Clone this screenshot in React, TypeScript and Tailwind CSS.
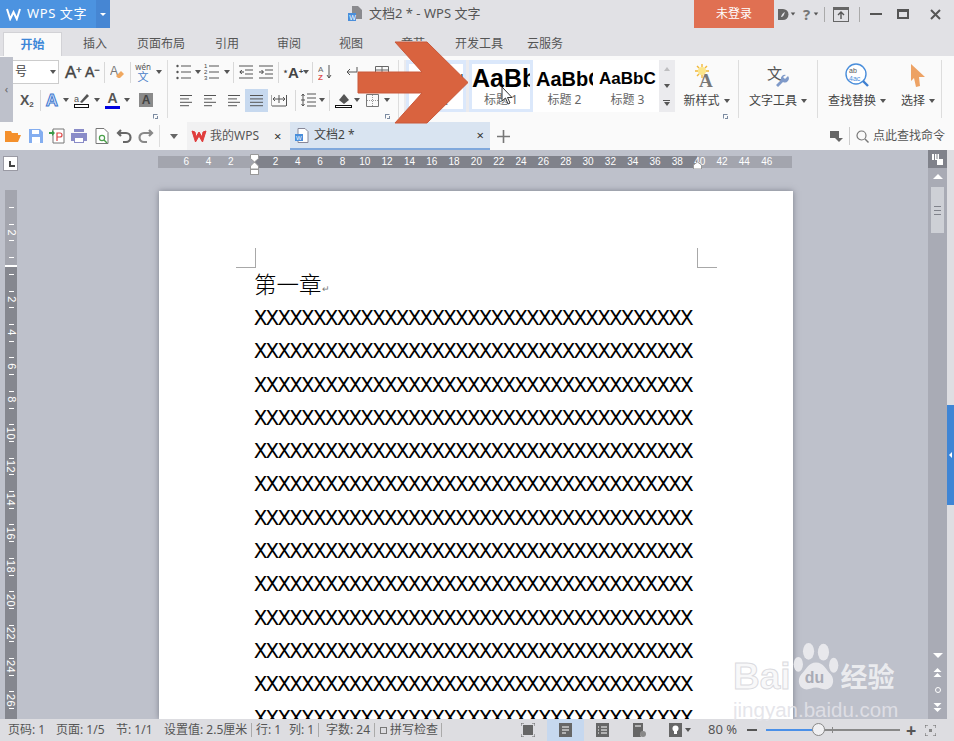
import type { ReactNode } from "react";

const tabs = [
  { label: "插入", w: "w-[66px]" },
  { label: "页面布局", w: "w-[66px]" },
  { label: "引用", w: "w-[66px]" },
  { label: "审阅", w: "w-[58px]" },
  { label: "视图", w: "w-[66px]" },
  { label: "章节", w: "w-[58px]" },
  { label: "开发工具", w: "w-[74px]" },
  { label: "云服务", w: "w-[58px]" },
];

const rulerNums = ["6", "4", "2", "", "2", "4", "6", "8", "10", "12", "14", "16", "18", "20", "22", "24", "26", "28", "30", "32", "34", "36", "38", "40", "42", "44", "46"];
const vRulerNums = ["4", "6", "8", "10", "12", "14", "16", "18", "20", "22", "24", "26"];
const xLine = "X".repeat(37);
const xLines = Array.from({ length: 13 }, (_, i) => i);

function Caret({ className = "" }: { className?: string }) {
  return <span className={`inline-block h-0 w-0 border-x-[3.5px] border-t-[4px] border-x-transparent border-t-[#555] ${className}`} />;
}

function Sep({ className = "" }: { className?: string }) {
  return <span className={`inline-block h-[21px] w-px bg-[#d8d8d8] ${className}`} />;
}

function Lines({ rows, className = "" }: { rows: number[]; className?: string }) {
  // small stack of lines, each number is a row width out of 14
  return (
    <svg width="14" height="13" viewBox="0 0 14 13" className={className}>
      {rows.map((w, i) => (
        <rect key={i} x="0" y={1 + i * 3.4} width={w} height="1" fill="#555" />
      ))}
    </svg>
  );
}

function ListIcon({ numbered }: { numbered?: boolean }) {
  return (
    <svg width="15" height="16" viewBox="0 0 15 16">
      {[2, 8, 14].map((y, i) =>
        numbered ? (
          <text key={y} x="0" y={y + 2} fontSize="6" fill="#444" fontFamily="Liberation Sans">{i + 1}</text>
        ) : (
          <circle key={y} cx="1.5" cy={y} r="1.2" fill="#555" />
        ),
      )}
      {[2, 8, 14].map((y) => (
        <rect key={y} x="5" y={y - 0.5} width="10" height="1" fill="#555" />
      ))}
    </svg>
  );
}

function IndentIcon({ right }: { right?: boolean }) {
  return (
    <svg width="14" height="14" viewBox="0 0 14 14">
      <path d="M0 1h14M6 5h8M6 9h8M0 13h14" stroke="#555" fill="none" />
      <path d={right ? "M0 7h4M2.5 5l2 2-2 2" : "M5 7H1M2.8 5l-2 2 2 2"} stroke="#3a3a3a" fill="none" />
    </svg>
  );
}

function QuickIcon({ children }: { children: ReactNode }) {
  return (
    <svg width="16" height="16" viewBox="0 0 16 16" className="shrink-0">
      {children}
    </svg>
  );
}

function BigTool({ icon, label, w }: { icon: ReactNode; label: string; w: string }) {
  return (
    <div className={`flex h-full shrink-0 flex-col items-center ${w}`}>
      <div className="flex h-[33px] items-center justify-center pt-[6px]">{icon}</div>
      <div className="mt-[4px] flex items-center gap-[4px] whitespace-nowrap text-[12px] leading-[16px] text-[#444]">
        {label}
        <Caret />
      </div>
    </div>
  );
}

function StyleItem({ w, sample, label, sampleClass, active }: { w: string; sample: string; label: string; sampleClass: string; active?: boolean }) {
  return (
    <div className={`flex h-[52px] shrink-0 flex-col items-center overflow-hidden border-[3px] border-t-[4px] bg-white ${w} ${active ? "border-[#dbe8fb]" : "border-white"}`}>
      <div className={`flex h-[29px] w-full items-center overflow-hidden whitespace-nowrap font-['Liberation_Sans'] font-bold text-black ${sampleClass}`}>
        {sample}
      </div>
      <div className="text-[12px] leading-[14px] text-[#666]">{label}</div>
    </div>
  );
}

function VRulerCell({ n }: { n: string }) {
  return (
    <div className="flex h-[33.4px] flex-col items-center">
      <div className="flex h-[15.7px] items-center justify-center">
        <span className="rotate-90 font-['Liberation_Sans'] text-[11px] leading-none tracking-[0.5px] text-white">{n}</span>
      </div>
      <div className="h-px w-[5px] shrink-0 bg-white" />
      <div className="h-[15.7px] shrink-0" />
      <div className="h-px w-[5px] shrink-0 bg-white" />
    </div>
  );
}

export default function App() {
  return (
    <div className="relative flex h-[741px] w-[954px] flex-col overflow-hidden bg-[#bec1cb] font-['Noto_Sans','Noto_Sans_CJK_SC',sans-serif] text-[12px] text-[#444]">
      {/* title bar */}
      <div className="flex h-[28px] shrink-0 items-stretch bg-[#e1e1e5]">
        <div className="flex w-[110px] shrink-0 items-stretch bg-[#4c93e0] text-white">
          <div className="flex w-[96px] items-center gap-[6px] pl-[6px]">
            <svg width="15" height="13" viewBox="0 0 15 13">
              <path d="M1 1l3.2 10L7.5 4l3.3 7L14 1" fill="none" stroke="#fff" strokeWidth="2" />
            </svg>
            <span className="whitespace-nowrap text-[13px] tracking-[0.6px]">WPS 文字</span>
          </div>
          <div className="flex flex-1 items-center justify-center bg-[#4686d3]">
            <span className="h-0 w-0 border-x-[3px] border-t-[3px] border-x-transparent border-t-white" />
          </div>
        </div>
        <div className="flex w-[584px] shrink-0 items-center pl-[238px] text-[13px] text-[#555]">
          <svg width="15" height="16" viewBox="0 0 15 16" className="mr-[6px]">
            <path d="M4 0h6l4 4v9H4z" fill="#8a8a8e" />
            <rect x="0" y="7" width="8" height="8" fill="#4a8edb" />
            <text x="1.3" y="14" fontSize="7" fill="#fff" fontFamily="Liberation Sans">W</text>
          </svg>
          <span className="whitespace-nowrap">文档2 * - WPS 文字</span>
        </div>
        <div className="flex w-[80px] shrink-0 items-center justify-center bg-[#e07052] text-[12px] text-white">未登录</div>
        <div className="flex flex-1 items-center text-[#666]">
          <svg width="11" height="13" viewBox="0 0 11 13" className="ml-[4px]">
            <path d="M0 1h5a5.5 5.5 0 0 1 0 11H0z" fill="#666" />
            <path d="M3 9c1-3 2-4 4-5-1 2-1 4-3 5z" fill="#e1e1e5" />
          </svg>
          <Caret className="ml-[1px] scale-75" />
          <span className="ml-[7px] text-[15px] font-bold leading-none text-[#777]">?</span>
          <Caret className="ml-[3px] scale-75" />
          <span className="ml-[5px] h-[15px] w-px bg-[#aaa]" />
          <svg width="16" height="15" viewBox="0 0 16 15" className="ml-[8px]">
            <rect x="0.5" y="0.5" width="15" height="14" fill="none" stroke="#666" />
            <rect x="0" y="0" width="16" height="3" fill="#666" />
            <path d="M8 12V5M5 8l3-3 3 3" fill="none" stroke="#555" strokeWidth="1.4" />
          </svg>
          <span className="ml-[10px] h-[15px] w-px bg-[#aaa]" />
          <span className="ml-[10px] h-[2px] w-[12px] bg-[#555]" />
          <span className="ml-[15px] h-[10px] w-[12px] border-2 border-t-[3px] border-[#555]" />
          <svg width="11" height="11" viewBox="0 0 11 11" className="ml-[21px]">
            <path d="M1 1l9 9M10 1l-9 9" stroke="#555" strokeWidth="2" />
          </svg>
        </div>
      </div>

      {/* ribbon tabs */}
      <div className="flex h-[28px] shrink-0 items-end bg-[#e1e1e5] pl-[3px] text-[12px] text-[#555]">
        <div className="flex h-[24px] w-[59px] items-center justify-center border-x border-t border-[#d2d2d6] bg-[#fafafa] font-bold text-[#3d87d8]">开始</div>
        {tabs.map((t) => (
          <div key={t.label} className={`flex h-[24px] items-center justify-center whitespace-nowrap ${t.w}`}>
            {t.label}
          </div>
        ))}
      </div>

      {/* ribbon */}
      <div className="flex h-[66px] shrink-0 items-stretch bg-[#fafafa]">
        <div className="mt-px flex h-[65px] w-[13px] shrink-0 items-center justify-center bg-[#bec1cb] text-[11px] text-[#666]">‹</div>

        {/* font group */}
        <div className="relative flex w-[154px] shrink-0 flex-col pt-[4px]">
          <div className="flex h-[24px] items-center">
            <div className="flex h-[24px] w-[46px] items-center justify-between border border-l-0 border-[#ccc] bg-white pl-[2px] pr-[2px] text-[12px]">
              号<Caret />
            </div>
            <span className="ml-[6px] w-[15px] whitespace-nowrap font-['Liberation_Sans'] text-[17px] leading-none [-webkit-text-stroke:0.4px_#444]">A<sup className="text-[9px]">+</sup></span>
            <span className="ml-[5px] w-[15px] whitespace-nowrap font-['Liberation_Sans'] text-[14px] leading-none [-webkit-text-stroke:0.4px_#444]">A<sup className="text-[9px]">−</sup></span>
            <Sep className="ml-[4px]" />
            <svg width="15" height="16" viewBox="0 0 15 16" className="ml-[5px]">
              <text x="0" y="11" fontSize="12" fill="#777" fontFamily="Liberation Sans">A</text>
              <path d="M6 12l5-5 3 3-4 4H8z" fill="#f0a860" />
            </svg>
            <Sep className="ml-[5px]" />
            <div className="ml-[4px] flex h-[20px] w-[16px] flex-col items-center leading-none">
              <span className="text-[8px] leading-[9px] text-[#555]">wén</span>
              <span className="text-[11px] leading-[11px] text-[#4a80c8]">文</span>
            </div>
            <Caret className="ml-[5px]" />
          </div>
          <div className="mt-[3px] flex h-[26px] items-center">
            <span className="ml-[7px] font-['Liberation_Sans'] text-[14px] font-bold leading-none text-[#555]">X<sub className="text-[8px]">2</sub></span>
            <Sep className="ml-[6px]" />
            <span className="ml-[5px] font-['Liberation_Sans'] text-[17px] font-bold leading-none text-[#dbe7fb] [-webkit-text-stroke:1px_#3e78cf]">A</span>
            <Caret className="ml-[5px]" />
            <svg width="16" height="17" viewBox="0 0 16 17" className="ml-[5px]">
              <path d="M6 10l7-8 2 2-7 7z" fill="#555" />
              <text x="0" y="10" fontSize="9" fill="#555" fontFamily="Liberation Sans">a</text>
              <rect x="0.5" y="12.5" width="14" height="3" fill="#fff" stroke="#111" />
            </svg>
            <Caret className="ml-[4px]" />
            <div className="ml-[5px] flex w-[15px] flex-col items-center">
              <span className="font-['Liberation_Sans'] text-[14px] font-bold leading-[14px] text-[#555]">A</span>
              <span className="mt-px h-[3px] w-[15px] bg-[#0000e0]" />
            </div>
            <Caret className="ml-[4px]" />
            <span className="ml-[9px] flex h-[14px] w-[14px] items-center justify-center bg-[#8a8a8a] font-['Liberation_Sans'] text-[12px] font-bold leading-none text-[#444]">A</span>
          </div>
          <svg width="5" height="5" viewBox="0 0 5 5" className="absolute bottom-[3px] right-[9px]">
            <path d="M0 .5h4.5M.5 0v4.5M4.5 2v3M2 4.5h3" stroke="#7a8aa0" fill="none" />
          </svg>
        </div>
        <span className="mt-[4px] h-[58px] w-px shrink-0 bg-[#ddd]" />

        {/* paragraph group */}
        <div className="relative flex w-[230px] shrink-0 flex-col pt-[4px]">
          <div className="flex h-[24px] items-center pl-[8px]">
            <ListIcon />
            <Caret className="ml-[4px]" />
            <span className="ml-[3px]" />
            <ListIcon numbered />
            <Caret className="ml-[5px]" />
            <Sep className="ml-[3px]" />
            <span className="ml-[5px]"><IndentIcon /></span>
            <span className="ml-[6px]"><IndentIcon right /></span>
            <Sep className="ml-[5px]" />
            <span className="ml-[4px] w-[17px] whitespace-nowrap font-['Liberation_Sans'] text-[15px] font-bold leading-none">
              <sup className="text-[8px]">⋆</sup>A<sup className="text-[8px]">+</sup>
            </span>
            <Caret className="ml-[3px]" />
            <Sep className="ml-[3px]" />
            <svg width="15" height="17" viewBox="0 0 15 17" className="ml-[5px]">
              <text x="0" y="8" fontSize="8" fill="#666" fontFamily="Liberation Sans">A</text>
              <text x="0" y="16" fontSize="8" fontWeight="bold" fill="#e05050" fontFamily="Liberation Sans">Z</text>
              <path d="M11 1v13M9 11l2 3 2-3" stroke="#555" fill="none" />
            </svg>
            <svg width="14" height="12" viewBox="0 0 14 12" className="ml-[12px]">
              <path d="M12 1v5H2M5 3L2 6l3 3" stroke="#555" fill="none" />
            </svg>
            <svg width="14" height="12" viewBox="0 0 14 12" className="ml-[16px]">
              <path d="M.5.5h13v11H.5zM.5 4h13M.5 8h13M7 .5v11" stroke="#666" fill="none" />
            </svg>
          </div>
          <div className="mt-[3px] flex h-[26px] items-center pl-[12px]">
            <Lines rows={[12, 9, 12, 9]} />
            <Lines rows={[12, 8, 12, 8]} className="ml-[10px]" />
            <Lines rows={[12, 9, 12, 9]} className="ml-[10px]" />
            <div className="ml-[3px] flex h-[23px] w-[23px] items-center justify-center bg-[#c7d9ef]">
              <Lines rows={[13, 13, 13, 13]} />
            </div>
            <svg width="16" height="13" viewBox="0 0 16 13" className="ml-[3px]">
              <path d="M0 1v11M15.5 1v11M1 12h14M2 5h12M4 3L2 5l2 2M12 3l2 2-2 2M8 1v8" stroke="#555" fill="none" />
            </svg>
            <Sep className="ml-[8px]" />
            <svg width="15" height="14" viewBox="0 0 15 14" className="ml-[5px]">
              <path d="M6 1h9M6 5h9M6 9h9M6 13h9M0 7h4M2 1v12M.5 3L2 1l1.5 2M.5 11L2 13l1.5-2" stroke="#555" fill="none" />
            </svg>
            <Caret className="ml-[3px]" />
            <Sep className="ml-[4px]" />
            <svg width="17" height="18" viewBox="0 0 17 18" className="ml-[5px]">
              <path d="M4 9l5-6 5 6-5 4z" fill="#555" />
              <rect x="0.5" y="14.5" width="16" height="2" fill="#fff" stroke="#111" />
            </svg>
            <Caret className="ml-[2px]" />
            <svg width="13" height="13" viewBox="0 0 13 13" className="ml-[6px]">
              <path d="M.5.5h12v12H.5z" stroke="#777" fill="none" />
              <path d="M6.5 1v11M1 6.5h11" stroke="#999" strokeDasharray="1 1" />
            </svg>
            <Caret className="ml-[5px]" />
          </div>
          <svg width="5" height="5" viewBox="0 0 5 5" className="absolute bottom-[3px] right-[8px]">
            <path d="M0 .5h4.5M.5 0v4.5M4.5 2v3M2 4.5h3" stroke="#7a8aa0" fill="none" />
          </svg>
        </div>
        <span className="mt-[4px] h-[58px] w-px shrink-0 bg-[#ddd]" />

        {/* style gallery */}
        <div className="ml-[5px] mt-[4px] flex h-[52px] w-[271px] shrink-0 bg-[#ebebee] pl-[2px]">
          <StyleItem w="w-[60px] mr-[3px]" sample="AaBbCcDd" label="正文" sampleClass="justify-center text-[11px] font-normal" active />
          <StyleItem w="w-[64px]" sample="AaBb" label="标题 1" sampleClass="text-[25px] leading-none" active />
          <StyleItem w="w-[63px]" sample="AaBbC" label="标题 2" sampleClass="text-[20px] leading-none" />
          <StyleItem w="w-[63px]" sample="AaBbC" label="标题 3" sampleClass="text-[17px] leading-none" />
          <div className="ml-px flex w-[13px] flex-col items-center bg-[#ebebee]">
            <span className="flex h-[17px] items-center"><Caret className="rotate-180 opacity-30" /></span>
            <span className="flex h-[17px] items-center"><Caret /></span>
            <span className="flex h-[18px] flex-col items-center justify-center gap-[1px]">
              <span className="h-px w-[7px] bg-[#555]" />
              <Caret />
            </span>
          </div>
        </div>

        {/* big tools */}
        <div className="relative shrink-0">
          <BigTool
            w="w-[63px]"
            label="新样式"
            icon={
              <svg width="26" height="24" viewBox="0 0 26 24">
                <circle cx="8" cy="7" r="4" fill="#fbe58a" />
                <path d="M8 0v3M8 11v3M1 7h3M12 7h3M3 2l2 2M13 2l-2 2M3 12l2-2" stroke="#f2b93a" strokeWidth="1.4" />
                <text x="5" y="23" fontSize="19" fontFamily="Liberation Serif" fontWeight="bold" fill="#777">A</text>
              </svg>
            }
          />
          <svg width="5" height="5" viewBox="0 0 5 5" className="absolute bottom-[3px] right-[10px]">
            <path d="M0 .5h4.5M.5 0v4.5M4.5 2v3M2 4.5h3" stroke="#7a8aa0" fill="none" />
          </svg>
        </div>
        <span className="mt-[4px] h-[58px] w-px shrink-0 bg-[#ddd]" />
        <BigTool
          w="w-[78px]"
          label="文字工具"
          icon={
            <svg width="23" height="24" viewBox="0 0 23 24">
              <text x="0" y="15" fontSize="15" fill="#555" fontFamily="Noto Sans CJK SC">文</text>
              <path d="M21 12l-3 3-2-2 3-2a4 4 0 0 0-5 5l-5 5 2 2 5-5a4 4 0 0 0 5-6z" fill="#7f9ac9" />
            </svg>
          }
        />
        <span className="mt-[4px] h-[58px] w-px shrink-0 bg-[#ddd]" />
        <BigTool
          w="w-[78px]"
          label="查找替换"
          icon={
            <svg width="25" height="25" viewBox="0 0 25 25">
              <circle cx="11" cy="11" r="10" fill="#fff" stroke="#4a8edb" strokeWidth="1.4" />
              <path d="M18 18l5 5" stroke="#3e7fd0" strokeWidth="2.4" />
              <text x="4" y="10" fontSize="7" fill="#555" fontFamily="Liberation Sans">ab</text>
              <text x="4" y="18" fontSize="7" fill="#4a8edb" fontFamily="Liberation Sans">4ac</text>
            </svg>
          }
        />
        <BigTool
          w="w-[44px]"
          label="选择"
          icon={
            <svg width="16" height="23" viewBox="0 0 16 23">
              <path d="M1 0l14 13H9l1 9-4 1-2-9-3 3z" fill="#eda264" />
            </svg>
          }
        />
        <span className="ml-[1px] mt-[4px] h-[58px] w-px shrink-0 bg-[#ddd]" />
      </div>

      {/* quick access and document tabs */}
      <div className="flex h-[28px] shrink-0 items-stretch bg-[#fafafa]">
        <div className="flex w-[187px] shrink-0 items-center pl-[5px]">
          <QuickIcon><path d="M0 14V3h6l1 2h6v2H4L2 13l2-6h12l-3 7z" fill="#f4902c" /></QuickIcon>
          <span className="ml-[7px]" />
          <QuickIcon><path d="M1 1h11l3 3v11H1z" fill="#84aef0" /><rect x="4" y="2" width="7" height="4" fill="#fff" /><rect x="4" y="9" width="8" height="6" fill="#fff" /></QuickIcon>
          <span className="ml-[5px]" />
          <QuickIcon>
            <path d="M4 1h11v14H4z" fill="#fff" stroke="#777" />
            <path d="M0 4h3V2l3 3-3 3V6H0z" fill="#3b9b4a" />
            <path d="M8 13V5h3a2 2 0 0 1 0 4H8" fill="none" stroke="#d44" strokeWidth="1.2" />
          </QuickIcon>
          <span className="ml-[6px]" />
          <QuickIcon><path d="M0 5h16v8h-3v2H3v-2H0zM3 1h10v3H3z" fill="#8a8cc8" /><rect x="4" y="10" width="8" height="4" fill="#fff" /></QuickIcon>
          <span className="ml-[7px]" />
          <QuickIcon>
            <path d="M2 .5h8l4 4v11H2z" fill="#fff" stroke="#777" />
            <circle cx="8" cy="10" r="2.6" fill="none" stroke="#4aa04a" strokeWidth="1.2" />
            <path d="M10 12l3 3" stroke="#4aa04a" strokeWidth="1.4" />
          </QuickIcon>
          <span className="ml-[6px]" />
          <QuickIcon><path d="M5 2L2 5l3 3M2 5h8a4 4 0 0 1 0 9H7" fill="none" stroke="#666" strokeWidth="2.2" /></QuickIcon>
          <span className="ml-[6px]" />
          <QuickIcon><path d="M11 2l3 3-3 3M14 5H6a4 4 0 0 0 0 9h3" fill="none" stroke="#888" strokeWidth="2.2" /></QuickIcon>
          <span className="ml-[5px] h-[22px] w-px bg-[#ddd]" />
          <span className="ml-[10px] h-0 w-0 border-x-[4.5px] border-t-[5px] border-x-transparent border-t-[#666]" />
        </div>
        <div className="flex w-[103px] shrink-0 items-center bg-[#f1f1f2] pl-[4px] text-[#555]">
          <svg width="16" height="13" viewBox="0 0 16 13">
            <path d="M1 1l3.5 11L8 6l3.5 6L15 1l-3 1-1 5-3-5-3 5-1-5z" fill="#e03c3c" stroke="#e03c3c" />
          </svg>
          <span className="ml-[3px] whitespace-nowrap">我的WPS</span>
          <span className="ml-[15px] text-[13px] leading-none text-[#333]">×</span>
        </div>
        <div className="flex w-[200px] shrink-0 items-center border-b-2 border-[#80a8dc] bg-[#d9e4f1] pl-[5px] text-[#444]">
          <svg width="14" height="15" viewBox="0 0 14 15">
            <path d="M3 .5h7l3 3v11H3z" fill="#fff" stroke="#889" />
            <rect x="0" y="6" width="8" height="7" fill="#4a8edb" />
            <text x="1" y="12" fontSize="6" fill="#fff" fontFamily="Liberation Sans">W</text>
          </svg>
          <span className="ml-[5px] whitespace-nowrap">文档2 *</span>
          <span className="ml-auto mr-[6px] text-[13px] leading-none text-[#333]">×</span>
        </div>
        <span className="ml-[7px] flex w-[13px] items-center justify-center">
          <svg width="13" height="13" viewBox="0 0 13 13"><path d="M6.5 0v13M0 6.5h13" stroke="#777" strokeWidth="1.6" /></svg>
        </span>
        <div className="ml-auto flex items-center pr-[9px]">
          <svg width="13" height="11" viewBox="0 0 13 11"><path d="M0 0h9v7H0zM5 7h8l-4 4z" fill="#666" /></svg>
          <span className="ml-[6px] h-[18px] w-px bg-[#ccc]" />
          <svg width="13" height="13" viewBox="0 0 13 13" className="ml-[6px]">
            <circle cx="5.5" cy="5.5" r="4.5" fill="none" stroke="#777" strokeWidth="1.2" />
            <path d="M9 9l3.5 3.5" stroke="#777" strokeWidth="1.4" />
          </svg>
          <span className="ml-[4px] whitespace-nowrap text-[#555]">点此查找命令</span>
        </div>
      </div>

      {/* document area */}
      <div className="flex min-h-0 flex-1">
        <div className="flex min-w-0 flex-1 flex-col">
          <div className="flex h-[41px] shrink-0 pt-[5px]">
            <div className="mt-[1px] ml-[3px] flex h-[15px] w-[15px] items-end justify-center border border-[#9a9aa4] bg-white pb-[3px] pl-[2px]">
              <span className="h-[6px] w-[6px] border-b-2 border-l-2 border-[#444]" />
            </div>
            <div className="relative ml-[140px] mt-[1px] flex h-[12px] w-[634px] items-center bg-[linear-gradient(90deg,#a3a5ae_96px,#80828b_96px,#80828b_539px,#a3a5ae_539px)] pl-[17px] font-['Liberation_Sans'] text-[10px] leading-none text-white">
              {rulerNums.map((n, i) => (
                <span key={i} className="w-[22.33px] shrink-0 text-center">{n}</span>
              ))}
              <svg width="9" height="22" viewBox="0 0 9 22" className="absolute left-[92px] top-[-2px]">
                <path d="M.5.5h8v4L4.5 8 .5 4.5zM4.5 8l4 4v3h-8v-3z" fill="#fff" stroke="#999" />
                <rect x=".5" y="15.5" width="8" height="5" fill="#fff" stroke="#999" />
              </svg>
              <svg width="9" height="7" viewBox="0 0 9 7" className="absolute left-[535px] top-[6px]">
                <path d="M4.5 0l4 3v4h-8V3z" fill="#fff" stroke="#999" />
              </svg>
            </div>
          </div>
          <div className="flex min-h-0 flex-1">
            <div className="ml-[5px] -mt-px flex w-[12px] shrink-0 flex-col items-stretch overflow-hidden bg-[#85878f]">
              <div className="flex h-[75px] shrink-0 flex-col items-center bg-[#a3a5ae] pt-[17px]">
                <div className="h-px w-[5px] shrink-0 bg-white" />
                <div className="h-[15.7px] shrink-0" />
                <div className="h-px w-[5px] shrink-0 bg-white" />
                <div className="flex h-[15.7px] shrink-0 items-center justify-center">
                  <span className="rotate-90 font-['Liberation_Sans'] text-[11px] leading-none text-white">2</span>
                </div>
                <div className="h-px w-[5px] shrink-0 bg-white" />
                <div className="h-[15.7px] shrink-0" />
                <div className="h-px w-[5px] shrink-0 bg-white" />
              </div>
              <div className="h-[2px] shrink-0 bg-white" />
              <div className="flex shrink-0 flex-col items-center pt-[7px]">
                <div className="h-px w-[5px] shrink-0 bg-white" />
                <div className="h-[15.7px] shrink-0" />
                <div className="h-px w-[5px] shrink-0 bg-white" />
                <VRulerCell n="2" />
                {vRulerNums.map((n) => (
                  <VRulerCell key={n} n={n} />
                ))}
              </div>
            </div>
            <div className="ml-[142px] w-[634px] shrink-0 overflow-hidden bg-white pl-[77px] pt-[57px] shadow-[0_0_6px_rgba(70,72,85,0.55)]">
              <div className="flex">
                <div className="h-[20px] w-[20px] border-b border-r border-[#a8a8a8]" />
                <div className="ml-[441px] h-[20px] w-[20px] border-b border-l border-[#a8a8a8]" />
              </div>
              <div className="ml-[18px] flex h-[34px] items-center text-[22.5px] font-light leading-none text-black">
                第一章<span className="mt-[6px] text-[9px] text-[#777]">↵</span>
              </div>
              {xLines.map((i) => (
                <div key={i} className="ml-[18px] h-[33.3px] whitespace-nowrap pt-px font-['Liberation_Mono'] text-[22px] leading-[33px] tracking-[-1.36px] text-black">
                  {xLine}
                </div>
              ))}
            </div>
          </div>
        </div>

        {/* vertical scrollbar */}
        <div className="flex w-[19px] shrink-0 flex-col items-center bg-[#a9abb5]">
          <div className="flex h-[18px] w-full items-center justify-center bg-[#80828b]">
            <svg width="11" height="11" viewBox="0 0 11 11">
              <path d="M0 0h7v6H0zM5 5h6v6H5z" fill="#fff" />
              <path d="M2.5 0v6M5 0v5" stroke="#80828b" />
            </svg>
          </div>
          <span className="mt-[6px] h-0 w-0 border-x-[5px] border-b-[5px] border-x-transparent border-b-white" />
          <div className="mt-[8px] flex h-[46px] w-[13px] flex-col items-center justify-center gap-[3px] bg-[#ced0d6]">
            <span className="h-px w-[7px] bg-[#80828b]" />
            <span className="h-px w-[7px] bg-[#80828b]" />
            <span className="h-px w-[7px] bg-[#80828b]" />
          </div>
          <div className="mt-auto flex flex-col items-center pb-[7px] text-white">
            <span className="h-0 w-0 border-x-[5px] border-t-[5px] border-x-transparent border-t-white" />
            <svg width="9" height="10" viewBox="0 0 9 10" className="mt-[10px]"><path d="M4.5 0l4 4h-8zM4.5 5l4 4h-8z" fill="#fff" /></svg>
            <span className="mt-[9px] h-[6px] w-[6px] rounded-full border border-white" />
            <svg width="9" height="10" viewBox="0 0 9 10" className="mt-[9px]"><path d="M4.5 5l4-4h-8zM4.5 10l4-4h-8z" fill="#fff" /></svg>
          </div>
        </div>
        <div className="flex w-[7px] shrink-0 flex-col bg-[#dedee2] pt-[255px]">
          <div className="flex h-[100px] items-center justify-center bg-[#3f85d5]">
            <span className="h-0 w-0 border-y-[3px] border-r-[3px] border-y-transparent border-r-white" />
          </div>
        </div>
      </div>

      {/* status bar */}
      <div className="z-10 flex h-[22px] shrink-0 items-center bg-[#dddde1] text-[12px] text-[#555]">
        <div className="flex w-[446px] shrink-0 items-center whitespace-nowrap pl-[8px]">
          <span className="w-[48px]">页码: 1</span>
          <span className="w-[60px]">页面: 1/5</span>
          <span className="w-[48px]">节: 1/1</span>
          <span className="w-[84px]">设置值: 2.5厘米</span>
          <span className="ml-[3px] h-[14px] w-px bg-[#aaa]" />
          <span className="ml-[4px] w-[33px]">行: 1</span>
          <span className="w-[29px]">列: 1</span>
          <span className="h-[14px] w-px bg-[#aaa]" />
          <span className="ml-[7px] w-[48px]">字数: 24</span>
          <span className="h-[14px] w-px bg-[#aaa]" />
          <span className="ml-[5px] h-[7px] w-[7px] border border-[#777]" />
          <span className="ml-[3px] w-[48px]">拼写检查</span>
          <span className="ml-[3px] h-[14px] w-px bg-[#aaa]" />
        </div>
        <div className="flex h-full flex-1 items-center">
          <svg width="14" height="14" viewBox="0 0 14 14" className="ml-[75px]">
            <rect x="2" y="2" width="10" height="10" fill="#666" />
            <path d="M0 3V0h3M11 0h3v3M14 11v3h-3M3 14H0v-3" fill="none" stroke="#666" />
          </svg>
          <div className="ml-[12px] flex h-full w-[37px] items-center justify-center bg-[#c6d8ef]">
            <svg width="13" height="14" viewBox="0 0 13 14">
              <rect width="13" height="14" fill="#666" />
              <path d="M3 4h7M3 7h7M3 10h4" stroke="#fff" />
            </svg>
          </div>
          <svg width="13" height="14" viewBox="0 0 13 14" className="ml-[12px]">
            <rect width="13" height="14" fill="#666" />
            <path d="M5 4h6M5 7h6M5 10h6M2 4h1M2 7h1M2 10h1" stroke="#fff" />
          </svg>
          <svg width="13" height="14" viewBox="0 0 13 14" className="ml-[24px]">
            <path d="M0 0h10v8a4 4 0 0 0-2 6H0z" fill="#666" />
            <path d="M2 3h6" stroke="#fff" />
            <circle cx="10" cy="11" r="3" fill="#888" />
          </svg>
          <svg width="13" height="14" viewBox="0 0 13 14" className="ml-[23px]">
            <rect width="13" height="14" fill="#666" />
            <circle cx="6.5" cy="5.5" r="3" fill="#fff" />
            <rect x="5" y="8" width="3" height="3" fill="#fff" />
          </svg>
          <Caret className="ml-[3px]" />
          <span className="ml-[17px] w-[30px] whitespace-nowrap text-[13px]">80 %</span>
          <span className="ml-[9px] h-[2px] w-[10px] bg-[#555]" />
          <div className="relative ml-[9px] flex h-[2px] w-[134px] bg-[#888]">
            <span className="h-full w-[48px] bg-[#4a90e8]" />
            <span className="absolute left-[46px] top-[-6px] h-[13px] w-[13px] rounded-full border border-[#888] bg-[#f0f0f2]" />
            <span className="absolute left-[66px] top-[-2px] h-[6px] w-px bg-[#888]" />
          </div>
          <span className="ml-[6px] text-[18px] font-bold leading-none text-[#555]">+</span>
          <svg width="11" height="11" viewBox="0 0 11 11" className="ml-[9px]">
            <path d="M0 3V0h3M8 0h3v3M11 8v3H8M3 11H0V8" fill="none" stroke="#666" />
            <rect x="4" y="4" width="3" height="3" fill="#888" />
          </svg>
        </div>
      </div>

      {/* red arrow laid over the ribbon */}
      <svg width="112" height="83" viewBox="0 0 112 83" className="absolute left-[357px] top-[41px]">
        <path d="M1 31h64L38 1h32l41 40.5L70 82H38l27-30H1z" fill="#d9633f" stroke="#c9583a" />
      </svg>

      {/* mouse pointer */}
      <svg width="13" height="19" viewBox="0 0 13 19" className="absolute left-[501px] top-[86px]">
        <path d="M1 1v14l3.5-3 2.5 6 2-1-2.5-5.5H11z" fill="#fff" stroke="#333" />
      </svg>

      {/* baidu watermark */}
      <div className="pointer-events-none absolute left-[733px] top-[640px] z-20 flex w-[172px] flex-col">
        <div className="flex h-[56px] items-end">
          <span className="font-['Liberation_Sans'] text-[37px] font-bold leading-[38px] text-[rgba(244,244,246,0.6)] [-webkit-text-stroke:1px_rgba(215,215,220,0.9)]">Bai</span>
          <svg width="50" height="54" viewBox="0 0 50 58" className="shrink-0">
            <g fill="rgba(236,236,240,0.9)">
              <ellipse cx="17" cy="10" rx="6" ry="9" />
              <ellipse cx="33" cy="11" rx="6" ry="9" />
              <ellipse cx="6" cy="24" rx="5" ry="8" />
              <ellipse cx="44" cy="25" rx="5" ry="8" />
              <path d="M25 22c8 0 11 8 16 13 5 6 2 16-6 16-4 0-6-2-10-2s-6 2-10 2c-8 0-11-10-6-16 5-5 8-13 16-13z" />
            </g>
            <text x="13" y="44" fontSize="17" fontWeight="bold" fill="#a9abb5" fontFamily="Liberation Sans">du</text>
          </svg>
          <span className="whitespace-nowrap text-[27px] font-bold leading-[38px] text-white/70">经验</span>
        </div>
        <span className="mt-[2px] whitespace-nowrap font-['Liberation_Sans'] text-[20.5px] leading-[24px] text-[rgba(226,226,232,0.9)]">jingyan.baidu.com</span>
      </div>
    </div>
  );
}
